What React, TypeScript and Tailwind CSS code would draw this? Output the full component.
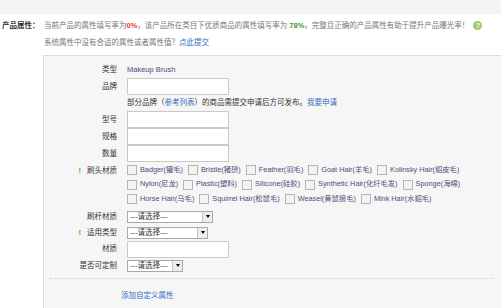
const font = { fontFamily: '"Liberation Sans", "Noto Sans CJK SC", sans-serif' };

function TextInput() {
    return <div className="h-[17px] w-[102px] border border-[#c9c9c9] bg-white" />;
}

function Select({ width }: { width: string }) {
    return (
        <div className={`flex h-[12px] items-stretch border border-[#a9a9a9] bg-white ${width}`}>
            <span className="flex-1 pl-[2px] text-[7.5px] leading-[10px] text-[#333]">---请选择---</span>
            <span className="flex w-[10px] items-center justify-center border-l border-[#c4c4c4] bg-[#ececec]">
                <span className="h-0 w-0 border-x-[2.5px] border-t-[3px] border-x-transparent border-t-black" />
            </span>
        </div>
    );
}

function Row({ label, required, children, className }: { label: string; required?: boolean; children: React.ReactNode; className?: string }) {
    return (
        <div className={`flex items-center ${className ?? ''}`}>
            <div className="flex w-[74px] shrink-0 items-center justify-end pr-[1px] text-[7.5px] text-[#333]">
                {required && <span className="mr-[6px] font-bold text-[#5aa02c]">!</span>}
                {label}
            </div>
            <div className="ml-[9px] flex items-center">{children}</div>
        </div>
    );
}

function Check({ label }: { label: string }) {
    return (
        <span className="flex items-center whitespace-nowrap">
            <span className="h-[10px] w-[10px] border border-[#b5b5b5] bg-[#f3f3f3]" />
            <span className="ml-[3px] text-[7.3px] text-[#54497a]">{label}</span>
        </span>
    );
}

const brushRows = [
    ['Badger(獾毛)', 'Bristle(猪鬃)', 'Feather(羽毛)', 'Goat Hair(羊毛)', 'Kolinsky Hair(貂皮毛)'],
    ['Nylon(尼龙)', 'Plastic(塑料)', 'Silicone(硅胶)', 'Synthetic Hair(化纤毛发)', 'Sponge(海绵)'],
    ['Horse Hair(马毛)', 'Squirrel Hair(松鼠毛)', 'Weasel(黄鼠狼毛)', 'Mink Hair(水貂毛)'],
];

export default function App() {
    return (
        <div className="h-[308px] w-[501px] overflow-hidden bg-white" style={font}>
            <div className="h-[14px] bg-[#f4f4f4]" />
            <div className="mt-[3px] flex">
                <div className="ml-[2px] w-[42px] shrink-0 text-[7.5px] font-bold leading-[17px] text-[#333]">产品属性：</div>
                <div className="text-[7.5px] leading-[17px] text-[#777]">
                    <div className="flex items-center whitespace-nowrap">
                        当前产品的属性填写率为<span className="font-bold text-[#f03c1c]">0%</span>，该产品所在类目下优质商品的属性填写率为
                        <span className="ml-[2px] font-bold text-[#3f9a2e]">78%</span>，完整且正确的产品属性有助于提升产品曝光率！
                        <span className="ml-[4px] flex h-[9px] w-[9px] items-center justify-center rounded-full bg-[#9ccc65] text-[7px] font-bold text-white">?</span>
                    </div>
                    <div>
                        系统属性中没有合适的属性或者属性值？<span className="text-[#2f6fc4]">点此提交</span>
                    </div>
                </div>
            </div>
            <div className="ml-[43px] mt-[4px] h-[260px] border-l border-t border-[#dcdcdc] bg-[#f6f6f6] pt-[7px]">
                <Row label="类型" className="h-[14px]">
                    <span className="text-[7.5px] text-[#54497a]">Makeup Brush</span>
                </Row>
                <Row label="品牌" className="mt-[1px]">
                    <TextInput />
                </Row>
                <div className="ml-[83px] h-[15px] text-[7.5px] leading-[15px] text-[#333]">
                    部分品牌（<span className="text-[#2f6fc4]">参考列表</span>）的商品需提交申请后方可发布。<span className="text-[#2f6fc4]">我要申请</span>
                </div>
                <Row label="型号" className="mt-[1px]">
                    <TextInput />
                </Row>
                <Row label="规格">
                    <TextInput />
                </Row>
                <Row label="数量">
                    <TextInput />
                </Row>
                <div className="mt-[1px] flex">
                    <div className="flex h-[15px] w-[74px] shrink-0 items-center justify-end pr-[1px] text-[7.5px] text-[#333]">
                        <span className="mr-[6px] font-bold text-[#5aa02c]">!</span>刷头材质
                    </div>
                    <div className="ml-[9px] flex flex-col">
                        {brushRows.map((row, i) => (
                            <div key={i} className="flex h-[14.5px] items-center gap-x-[5px]">
                                {row.map(l => (
                                    <Check key={l} label={l} />
                                ))}
                            </div>
                        ))}
                    </div>
                </div>
                <Row label="刷杆材质" className="mt-[4px]">
                    <Select width="w-[86px]" />
                </Row>
                <Row label="适用类型" required className="mt-[4px]">
                    <Select width="w-[81px]" />
                </Row>
                <Row label="材质" className="mt-[2px]">
                    <TextInput />
                </Row>
                <Row label="是否可定制" className="mt-[2px]">
                    <Select width="w-[56px]" />
                </Row>
                <div className="ml-[6px] mt-[6px] w-[444px] border-t border-dotted border-[#cfcfcf]" />
                <div className="ml-[77px] mt-[11px] text-[7.5px] text-[#2f6fc4]">添加自定义属性</div>
            </div>
        </div>
    );
}
